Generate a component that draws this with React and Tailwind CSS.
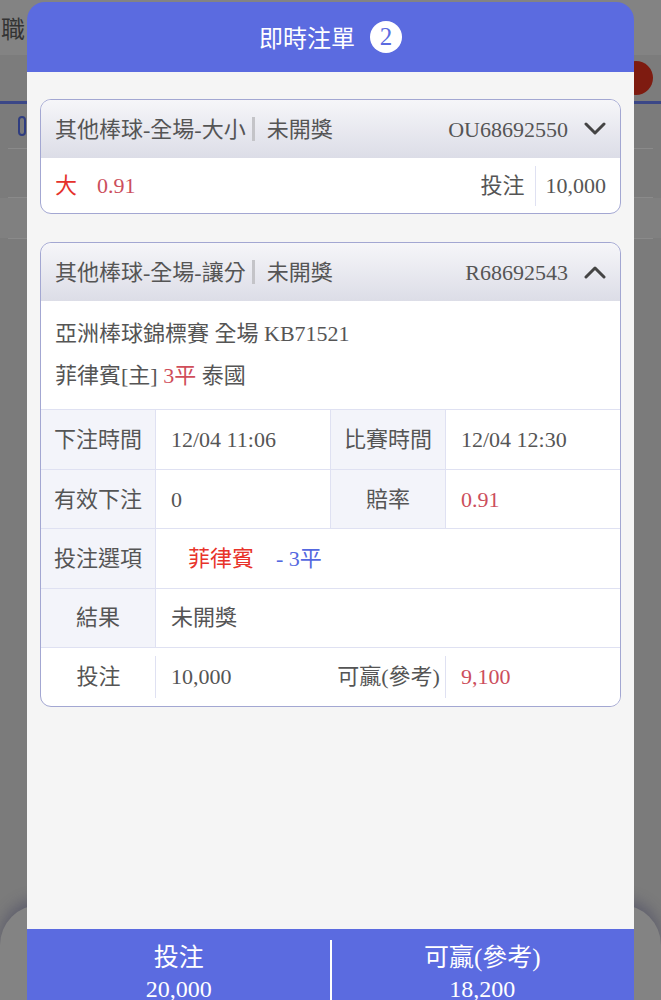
import React from 'react';

const BLUE = 'bg-[#5b6be0]';

function Chevron({ up }) {
  return (
    <svg width="22" height="14" viewBox="0 0 22 14" className="shrink-0">
      <polyline
        points={up ? '2,12 11,3 20,12' : '2,2 11,11 20,2'}
        fill="none"
        stroke="#444"
        strokeWidth="3"
        strokeLinecap="round"
        strokeLinejoin="round"
      />
    </svg>
  );
}

function CardHeader({ title, id, up }) {
  return (
    <div className="flex h-[58px] items-center bg-gradient-to-b from-[#f6f6f9] to-[#dcdde7] pl-[14px] pr-[14px] rounded-t-[10px]">
      <span>{title}</span>
      <span className="ml-[6px] mr-[12px] h-[24px] w-[3px] bg-[#c4c4c8]" />
      <span>未開獎</span>
      <span className="ml-auto mr-[16px]">{id}</span>
      <Chevron up={up} />
    </div>
  );
}

function Label({ children, plain }) {
  return (
    <div className={`flex items-center justify-center ${plain ? 'bg-white' : 'bg-[#f3f4fa] border-r border-[#dfe1f2]'}`}>
      {children}
    </div>
  );
}

function Value({ children, className = '' }) {
  return <div className={`flex items-center pl-[15px] bg-white ${className}`}>{children}</div>;
}

export default function App() {
  return (
    <div className="relative h-[1000px] w-full overflow-hidden bg-[#7b7b7b] font-['Liberation_Serif','Noto_Sans_CJK_TC',serif] text-[22px] text-[#555]">
      {/* dimmed page behind */}
      <div className="flex h-[55px] items-center bg-[#838383] pl-[1px] text-[24px] text-[#333] font-['Noto_Sans_CJK_TC',sans-serif]">
        <span>職</span>
      </div>
      <div className="flex h-[46px] items-center justify-end bg-[#7c7c7c] pr-[8px]">
        <div className="h-[34px] w-[34px] rounded-full bg-[#7e1b10]" />
      </div>
      <div className="h-[3px] bg-[#3b4787]" />
      <div className="flex h-[44px] items-center pl-[18px]">
        <div className="h-[20px] w-[8px] rounded-full border-2 border-[#2f3d80]" />
      </div>
      <div className="mx-[8px] h-px bg-[#8a8a8a]" />
      <div className="h-[48px]" />
      <div className="mx-[8px] h-px bg-[#8a8a8a]" />
      <div className="h-[40px] bg-[#808080]" />
      <div className="mx-[8px] h-px bg-[#8a8a8a]" />

      {/* sheet below the modal */}
      <div className="absolute left-0 right-0 top-[905px] h-[120px] rounded-t-[40px] bg-[#838383] shadow-[0_-6px_14px_rgba(60,60,90,0.45)]" />

      {/* modal */}
      <div className="absolute left-[27px] right-[27px] top-[2px] bottom-0 flex flex-col overflow-hidden rounded-t-[18px]">
        <div className={`flex h-[70px] shrink-0 items-center justify-center gap-[15px] ${BLUE}`}>
          <span className="text-[24px] text-white font-['Noto_Sans_CJK_TC',sans-serif]">即時注單</span>
          <span className="flex h-[32px] w-[32px] items-center justify-center rounded-full bg-white text-[25px] text-[#5b6be0]">2</span>
        </div>

        <div className="flex flex-1 flex-col gap-[28px] bg-[#f5f5f5] px-[13px] pt-[27px]">
          {/* card 1 */}
          <div className="rounded-[11px] border border-[#a3a7d2] bg-white">
            <CardHeader title="其他棒球-全場-大小" id="OU68692550" />
            <div className="flex h-[55px] items-center pl-[14px] pr-[14px]">
              <span className="text-[#e5322b]">大</span>
              <span className="ml-[20px] text-[#cc4e5c]">0.91</span>
              <span className="ml-auto">投注</span>
              <span className="mx-[10px] h-[40px] w-px bg-[#dfe1f2]" />
              <span>10,000</span>
            </div>
          </div>

          {/* card 2 */}
          <div className="overflow-hidden rounded-[11px] border border-[#a3a7d2] bg-white">
            <CardHeader title="其他棒球-全場-讓分" id="R68692543" up />
            <div className="flex flex-col pl-[14px] pt-[11px] pb-[13px]">
              <div className="flex h-[42px] items-center">亞洲棒球錦標賽 全場 KB71521</div>
              <div className="flex h-[42px] items-center">
                菲律賓[主]&nbsp;<span className="text-[#d04e5a]">3平</span>&nbsp;泰國
              </div>
            </div>
            <div className="grid grid-cols-[115px_175px_115px_1fr] auto-rows-[59.2px] border-t border-[#dfe1f2]">
              <Label>下注時間</Label>
              <Value className="border-r border-[#dfe1f2]">12/04 11:06</Value>
              <Label>比賽時間</Label>
              <Value>12/04 12:30</Value>

              <div className="col-span-4 grid grid-cols-subgrid border-t border-[#dfe1f2]">
                <Label>有效下注</Label>
                <Value className="border-r border-[#dfe1f2]">0</Value>
                <Label>賠率</Label>
                <Value className="text-[#cc4e5c]">0.91</Value>
              </div>

              <div className="col-span-4 grid grid-cols-subgrid border-t border-[#dfe1f2]">
                <Label>投注選項</Label>
                <Value className="col-span-3 pl-[32px]">
                  <span className="text-[#e8332a]">菲律賓</span>
                  <span className="ml-[22px] text-[#5468e0]">- 3平</span>
                </Value>
              </div>

              <div className="col-span-4 grid grid-cols-subgrid border-t border-[#dfe1f2]">
                <Label>結果</Label>
                <Value className="col-span-3">未開獎</Value>
              </div>

              <div className="col-span-4 grid grid-cols-subgrid border-t border-[#dfe1f2]">
                <div className="relative flex items-center justify-center">
                  投注
                  <span className="absolute right-0 top-[8px] bottom-[8px] w-px bg-[#dfe1f2]" />
                </div>
                <Value>10,000</Value>
                <div className="relative flex items-center justify-center">
                  可贏(參考)
                  <span className="absolute right-0 top-[8px] bottom-[8px] w-px bg-[#dfe1f2]" />
                </div>
                <Value className="text-[#cc4e5c]">9,100</Value>
              </div>
            </div>
          </div>
        </div>

        <div className={`relative grid h-[71px] shrink-0 grid-cols-2 ${BLUE} text-white`}>
          <div className="flex flex-col items-center pt-[13px]">
            <span className="text-[25px] leading-[32px]">投注</span>
            <span className="text-[24px] leading-[30px]">20,000</span>
          </div>
          <span className="absolute left-1/2 top-[11px] bottom-0 w-[2px] -translate-x-1/2 bg-white" />
          <div className="flex flex-col items-center pt-[13px]">
            <span className="text-[25px] leading-[32px]">可贏(參考)</span>
            <span className="text-[24px] leading-[30px]">18,200</span>
          </div>
        </div>
      </div>
    </div>
  );
}
